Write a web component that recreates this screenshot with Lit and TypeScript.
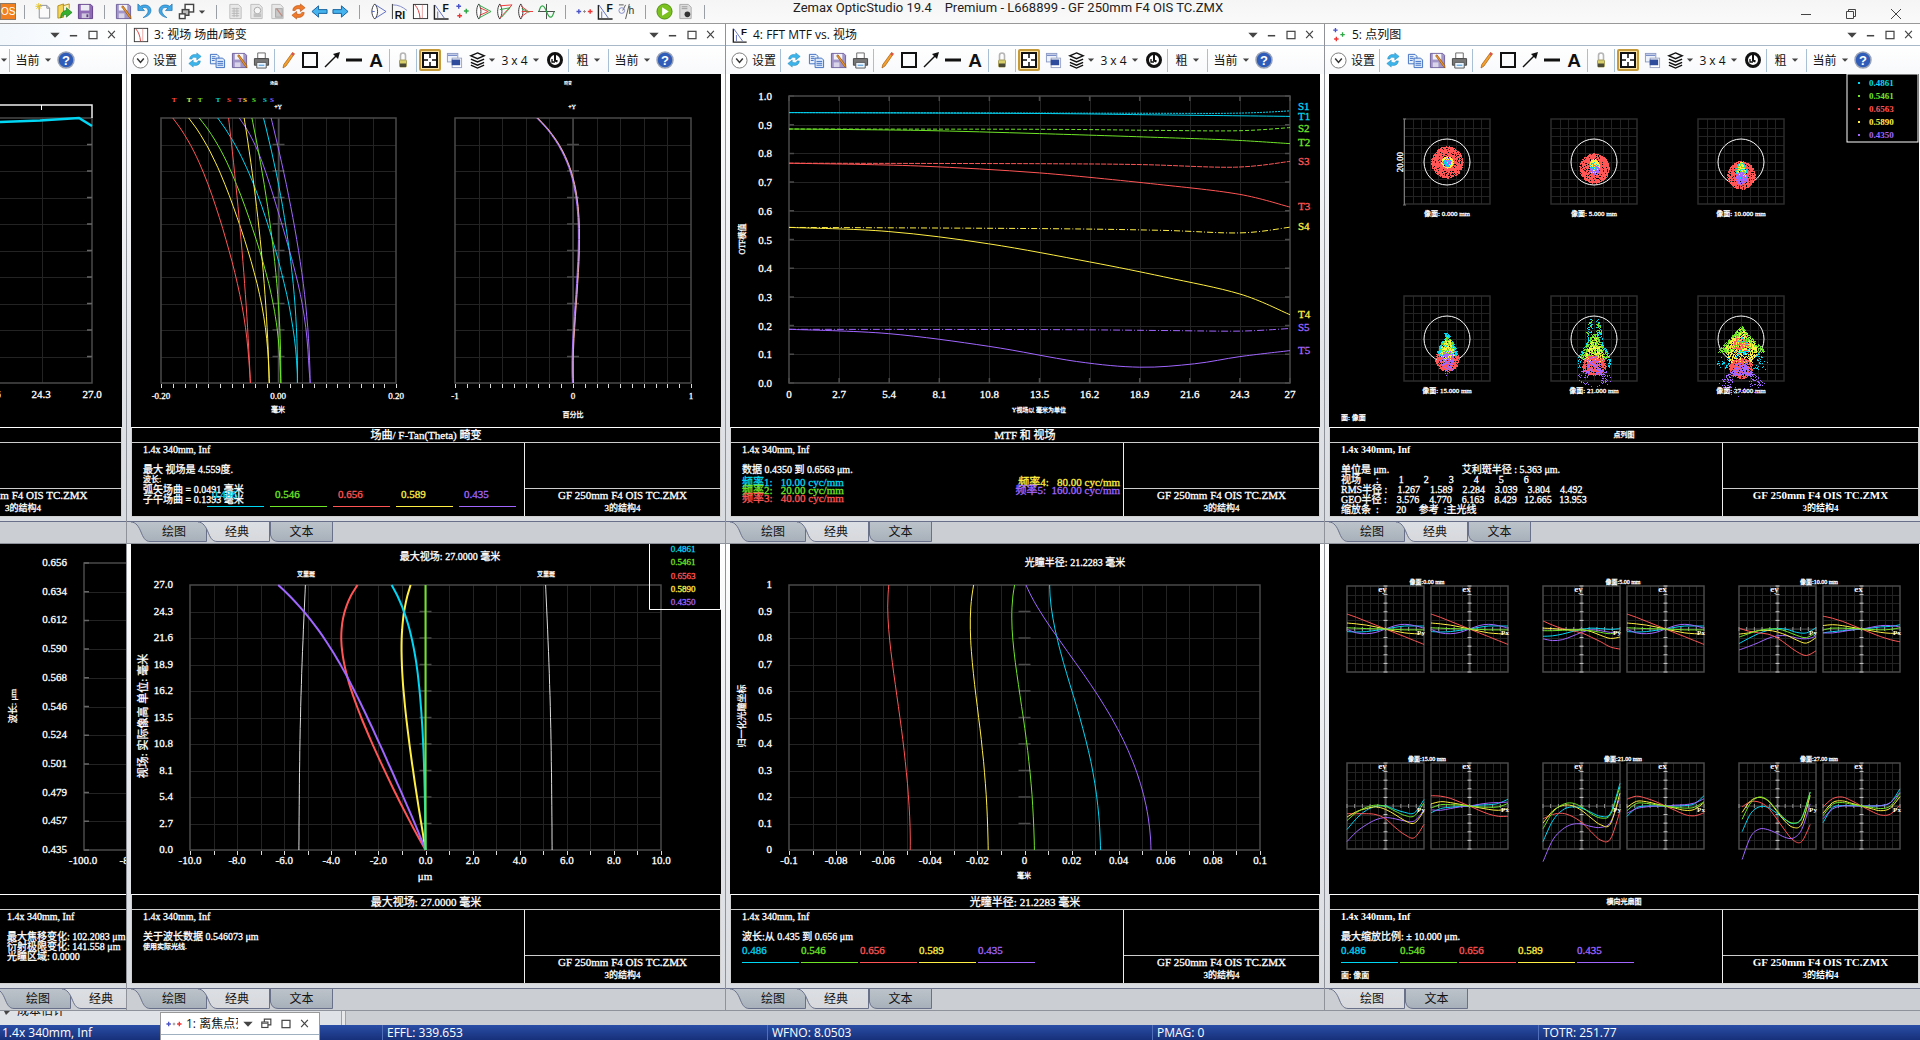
import { LitElement, html, svg, css, nothing, type TemplateResult } from "lit";
import { customElement, property } from "lit/decorators.js";
import { classMap } from "lit/directives/class-map.js";

const CYAN = "#00d7f5";
const GREEN = "#6fe528";
const RED = "#ff5555";
const YELLOW = "#ffee44";
const PURPLE = "#a066ff";
const GRID = "#232323";
const FRAME = "#4a4a4a";

type Pt = [number, number];

/* ---------- drawing helpers ---------- */

function smooth(pts: Pt[]): string {
  const f = (n: number) => n.toFixed(1);
  let d = `M${f(pts[0][0])} ${f(pts[0][1])}`;
  for (let i = 0; i < pts.length - 1; i++) {
    const a = pts[i - 1] ?? pts[i];
    const b = pts[i];
    const c = pts[i + 1];
    const e = pts[i + 2] ?? c;
    d += `C${f(b[0] + (c[0] - a[0]) / 6)} ${f(b[1] + (c[1] - a[1]) / 6)} ${f(c[0] - (e[0] - b[0]) / 6)} ${f(c[1] - (e[1] - b[1]) / 6)} ${f(c[0])} ${f(c[1])}`;
  }
  return d;
}

/** Least-squares polynomial through evenly spaced samples, evaluated on [0, 1]. */
function polyfit(v: number[], deg: number): (t: number) => number {
  const m = deg + 1;
  const a: number[][] = Array.from({ length: m }, () => new Array(m + 1).fill(0));
  v.forEach((y, i) => {
    const t = i / (v.length - 1);
    for (let r = 0; r < m; r++) {
      for (let c = 0; c < m; c++) a[r][c] += t ** (r + c);
      a[r][m] += y * t ** r;
    }
  });
  for (let i = 0; i < m; i++) {
    let p = i;
    for (let r = i + 1; r < m; r++) if (Math.abs(a[r][i]) > Math.abs(a[p][i])) p = r;
    [a[i], a[p]] = [a[p], a[i]];
    for (let r = 0; r < m; r++) {
      if (r === i) continue;
      const k = a[r][i] / a[i][i];
      for (let c = i; c <= m; c++) a[r][c] -= k * a[i][c];
    }
  }
  const q = a.map((row, i) => row[m] / row[i]);
  return (t) => q.reduce((s, c, i) => s + c * t ** i, 0);
}

function label(x: number, y: number, s: string, size = 11, anchor = "middle", fill = "#fff", bold = false) {
  return svg`<text x=${x} y=${y + Math.round(size * 0.35)} font-size=${size} text-anchor=${anchor} fill=${fill} stroke=${fill} stroke-width=${bold ? 0 : 0.3} font-weight=${bold ? 700 : 400}>${s}</text>`;
}

function vlabel(x: number, y: number, s: string, size: number) {
  return svg`<text transform="translate(${x + Math.round(size * 0.35)} ${y}) rotate(-90)" font-size=${size} text-anchor="middle" fill="#fff" stroke="#fff" stroke-width="0.3">${s}</text>`;
}

interface Box { x0: number; x1: number; y0: number; y1: number; }

function grid(b: Box, nx: number, ny: number, frame = FRAME) {
  let d = "";
  for (let i = 1; i < nx; i++) d += `M${Math.round(b.x0 + ((b.x1 - b.x0) * i) / nx)}.5 ${b.y0}V${b.y1}`;
  for (let j = 1; j < ny; j++) d += `M${b.x0} ${Math.round(b.y0 + ((b.y1 - b.y0) * j) / ny)}.5H${b.x1}`;
  return svg`<path d=${d} stroke=${GRID} fill="none"/>
    <rect x=${b.x0} y=${b.y0} width=${b.x1 - b.x0} height=${b.y1 - b.y0} fill="none" stroke=${frame} stroke-width="1.5"/>`;
}

function ticksBelow(b: Box, n: number) {
  let d = "";
  for (let i = 0; i <= n; i++) d += `M${Math.round(b.x0 + ((b.x1 - b.x0) * i) / n)}.5 ${b.y1 + 1}v4`;
  return svg`<path d=${d} stroke="#ddd" fill="none"/>`;
}

function centreTicks(b: Box, n: number) {
  const c = (b.x0 + b.x1) / 2;
  let d = "";
  for (let j = 1; j < n; j++) d += `M${c - 6} ${b.y0 + ((b.y1 - b.y0) * j) / n}h12`;
  return svg`<path d=${d} stroke=${FRAME} stroke-width="1.5"/>`;
}

/** Curve whose samples are spread evenly from the top of the box to its bottom. */
function downCurve(b: Box, lo: number, hi: number, xs: number[], color: string, w = 1) {
  const fit = xs.length > 2 ? polyfit(xs, xs.length > 8 ? 5 : 3) : null;
  const steps = fit ? 24 : 1;
  const pts: Pt[] = [];
  for (let i = 0; i <= steps; i++) {
    const t = i / steps;
    const v = fit ? fit(t) : xs[i];
    pts.push([b.x0 + ((v - lo) / (hi - lo)) * (b.x1 - b.x0), b.y0 + (b.y1 - b.y0) * t]);
  }
  return svg`<path d=${smooth(pts)} fill="none" stroke=${color} stroke-width=${w}/>`;
}

/* ---------- charts ---------- */

function chartPolychromatic() {
  const b: Box = { x0: -360, x1: 92, y0: 44, y1: 309 };
  let ticks = "";
  for (let j = 1; j < 10; j++) ticks += `M87 ${44 + j * 26.5}h5`;
  return svg`
    ${grid(b, 9, 10)}
    <path d=${ticks} stroke="#666" stroke-width="1.5"/>
    <path d="M0 31H92V44" fill="none" stroke="#eee" stroke-width="1.5"/>
    <path d="M41.5 31v5" stroke="#fff"/>
    <path d="M0 48L40 46.500L79 44L92 52" fill="none" stroke=${CYAN} stroke-width="2.5"/>
    ${label(-9, 320, "21.6")}${label(41, 320, "24.3")}${label(92, 320, "27.0")}`;
}

function chartFieldCurvature() {
  const a: Box = { x0: 30, x1: 265, y0: 44, y1: 309 };
  const c: Box = { x0: 324, x1: 560, y0: 44, y1: 309 };
  const t: [string, number[]][] = [
    [RED, [-0.18, -0.15, -0.129, -0.112, -0.098, -0.083, -0.073, -0.063, -0.056, -0.0505, -0.048]],
    [YELLOW, [-0.153, -0.1225, -0.101, -0.083, -0.066, -0.052, -0.0395, -0.029, -0.022, -0.0174, -0.0158]],
    [GREEN, [-0.135, -0.103, -0.082, -0.063, -0.046, -0.032, -0.02, -0.009, -0.002, 0.002, 0.004]],
    [CYAN, [-0.1035, -0.0743, -0.052, -0.033, -0.019, -0.005, 0.007, 0.0174, 0.0253, 0.03, 0.0324]],
    [PURPLE, [-0.067, -0.0395, -0.023, -0.008, 0.0055, 0.019, 0.031, 0.0395, 0.0466, 0.0514, 0.0538]],
    [RED, [-0.085, -0.075, -0.066, -0.059, -0.052, -0.048]],
    [YELLOW, [-0.0585, -0.045, -0.034, -0.0255, -0.019, -0.0158]],
    [GREEN, [-0.045, -0.029, -0.0134, -0.004, 0.002, 0.004]],
    [CYAN, [-0.0253, -0.005, 0.012, 0.0245, 0.03, 0.0324]],
    [PURPLE, [-0.0126, 0.0087, 0.026, 0.041, 0.05, 0.0538]],
  ];
  const d = [-0.303, -0.118, -0.025, 0.031, 0.051, 0.051, 0.039, 0.024, 0.008, 0, 0];
  const marks: [number, string, string][] = [
    [43, "T", RED], [58, "T", YELLOW], [69, "T", GREEN], [87, "T", CYAN], [98, "S", RED],
    [109, "T", PURPLE], [114, "S", YELLOW], [123, "S", GREEN], [134, "S", CYAN], [141, "S", PURPLE],
  ];
  return svg`
    ${grid(a, 10, 10)}${grid(c, 10, 10)}
    <path d="M147.500 44V309M442 44V309" stroke=${FRAME} stroke-width="1.5"/>
    ${centreTicks(a, 10)}${centreTicks(c, 10)}${ticksBelow(a, 20)}${ticksBelow(c, 20)}
    ${t.map(([col, xs]) => downCurve(a, -0.2, 0.2, xs, col))}
    ${downCurve(c, -1, 1, d.map((v) => v - 0.006), PURPLE)}
    ${downCurve(c, -1, 1, d.map((v) => v + 0.004), "#ffb080")}
    ${downCurve(c, -1, 1, d, "#c89be0")}
    ${marks.map(([x, s, col]) => label(x, 26, s, 7, "middle", col, true))}
    ${label(143, 10, "场曲", 4, "middle", "#fff", true)}${label(437, 10, "畸变", 4, "middle", "#fff", true)}
    ${label(147, 33, "+Y", 6)}${label(441, 33, "+Y", 6)}
    ${label(30, 322, "-0.20", 9)}${label(147, 322, "0.00", 9)}${label(265, 322, "0.20", 9)}
    ${label(324, 322, "-1", 9)}${label(442, 322, "0", 9)}${label(560, 322, "1", 9)}
    ${label(147, 336, "毫米", 7)}${label(442, 341, "百分比", 7)}`;
}

function chartMtf() {
  const b: Box = { x0: 59, x1: 560, y0: 22, y1: 309 };
  const put = (p: Pt): Pt => [b.x0 + (p[0] / 27) * 501, b.y1 - p[1] * 287];
  const solid: [string, Pt[]][] = [
    [CYAN, [[0, 0.942], [13.5, 0.939], [20, 0.934], [27, 0.929]]],
    [GREEN, [[0, 0.885], [7, 0.88], [13.5, 0.869], [20.2, 0.855], [24, 0.846], [27, 0.834]]],
    [RED, [[0, 0.766], [7, 0.756], [13.5, 0.732], [20.2, 0.69], [24.3, 0.657], [27, 0.613]]],
    [YELLOW, [[0, 0.542], [5.35, 0.528], [10.76, 0.485], [16.2, 0.422], [20.2, 0.37], [24.3, 0.31], [27, 0.238]]],
    [PURPLE, [[0, 0.187], [5.35, 0.172], [10.76, 0.128], [15.5, 0.075], [18.9, 0.055], [21.85, 0.067], [24.3, 0.092], [27, 0.113]]],
  ];
  const dashed: [string, string, Pt[]][] = [
    [CYAN, "2 1", [[0, 0.942], [18, 0.94], [24, 0.94], [27, 0.948]]],
    [GREEN, "4 2", [[0, 0.885], [13.5, 0.884], [20, 0.88], [24.3, 0.879], [27, 0.89]]],
    [RED, "5 1", [[0, 0.766], [13.5, 0.764], [19, 0.761], [24, 0.752], [27, 0.772]]],
    [YELLOW, "6 2 1 2", [[0, 0.542], [13.5, 0.538], [20, 0.532], [24.3, 0.523], [27, 0.543]]],
    [PURPLE, "7 2 1 2", [[0, 0.187], [13.5, 0.186], [20, 0.183], [24.3, 0.181], [27, 0.19]]],
  ];
  const tags: [string, number, string][] = [
    ["S1", 32, CYAN], ["T1", 42, CYAN], ["S2", 54, GREEN], ["T2", 68, GREEN], ["S3", 87, RED],
    ["T3", 132, RED], ["S4", 152, YELLOW], ["T4", 240, YELLOW], ["S5", 253, PURPLE], ["T5", 276, PURPLE],
  ];
  const xt = ["0", "2.7", "5.4", "8.1", "10.8", "13.5", "16.2", "18.9", "21.6", "24.3", "27"];
  let ticks = "";
  for (let i = 0; i <= 10; i++) ticks += `M${59 + 50.1 * i} 22v5M${59 + 50.1 * i} 309v-5M59 ${22 + 28.7 * i}h5M560 ${22 + 28.7 * i}h-5`;
  return svg`
    ${grid(b, 10, 10)}<path d=${ticks} stroke=${FRAME} stroke-width="1.5"/>
    ${dashed.map(([col, dash, p]) => svg`<path d=${smooth(p.map(put))} fill="none" stroke=${col} stroke-dasharray=${dash}/>`)}
    ${solid.map(([col, p]) => svg`<path d=${smooth(p.map(put))} fill="none" stroke=${col}/>`)}
    ${xt.map((s, i) => label(59 + 50.1 * i, 320, s))}
    ${xt.map((_, i) => label(42, 22 + 28.7 * i, (1 - i / 10).toFixed(1), 11, "end"))}
    ${tags.map(([s, y, col]) => label(568, y, s, 11, "start", col))}
    ${label(309, 336, "Y视场以 毫米为单位", 6)}${vlabel(12, 165, "OTF模值", 8)}`;
}

/** Profile of a ray cloud: [y, half width] pairs from top to bottom. */
interface Cloud { c: string; n: number; p: Pt[]; rim?: number; }

function rng(seed: number) {
  let a = seed;
  return () => {
    a = (a + 0x6d2b79f5) | 0;
    let t = Math.imul(a ^ (a >>> 15), 1 | a);
    t = (t + Math.imul(t ^ (t >>> 7), 61 | t)) ^ t;
    return ((t ^ (t >>> 14)) >>> 0) / 4294967296;
  };
}

function disc(c: string, n: number, cy: number, rx: number, ry: number, rim = 0): Cloud {
  const p: Pt[] = [];
  for (let i = 0; i <= 12; i++) {
    const a = (Math.PI * i) / 12;
    p.push([cy - Math.cos(a) * ry, Math.sin(a) * rx]);
  }
  return { c, n, p, rim };
}

function dots(cx: number, cy: number, k: Cloud, seed: number) {
  const r = rng(seed);
  const top = k.p[0][0];
  const bottom = k.p[k.p.length - 1][0];
  const maxW = Math.max(...k.p.map((q) => q[1]));
  const total = k.rim ? k.n : k.n * 1.8;
  let d = "";
  let made = 0;
  let guard = 0;
  while (made < total && guard++ < total * 20) {
    const y = top + r() * (bottom - top);
    const x = (r() * 2 - 1) * maxW;
    let i = 0;
    while (i < k.p.length - 2 && k.p[i + 1][0] < y) i++;
    const [ya, wa] = k.p[i];
    const [yb, wb] = k.p[i + 1];
    const w = wa + ((wb - wa) * (y - ya)) / (yb - ya || 1);
    if (Math.abs(x) > w || (k.rim && Math.abs(x) < w * k.rim)) continue;
    d += `M${Math.round(cx + x)} ${Math.round(cy + y)}h1v1h-1z`;
    made++;
  }
  return svg`<path d=${d} fill=${k.c}/>`;
}

const SPOTS: { name: string; clouds: Cloud[] }[] = [
  { name: "0.000", clouds: [disc(RED, 800, 0, 16, 16), disc(YELLOW, 160, 0, 6, 6), disc(PURPLE, 40, 0, 4, 5), disc(CYAN, 16, 0, 4, 4)] },
  { name: "5.000", clouds: [disc(RED, 700, 6, 15, 15), disc(YELLOW, 160, 4, 5, 7), disc(PURPLE, 60, 8, 5, 4), disc(CYAN, 20, 4, 4, 4)] },
  { name: "10.000", clouds: [
    disc(RED, 600, 13, 14, 14),
    { c: CYAN, n: 110, p: [[-3, 0], [3, 4], [10, 6], [18, 4]] },
    { c: YELLOW, n: 70, p: [[0, 1], [6, 4], [14, 4]] },
    { c: GREEN, n: 20, p: [[0, 1], [8, 5], [12, 4]] }, disc(PURPLE, 100, 16, 6, 6)] },
  { name: "15.000", clouds: [
    disc(RED, 440, 20, 12, 12),
    { c: CYAN, n: 220, p: [[-6, 3], [-1, 3], [6, 8], [12, 10], [16, 9]] },
    { c: GREEN, n: 110, p: [[-3, 1], [3, 5], [10, 7], [15, 6]] },
    { c: YELLOW, n: 90, p: [[0, 2], [8, 6], [16, 7], [20, 4]] },
    disc(PURPLE, 90, 20, 7, 9), { c: PURPLE, n: 14, p: [[28, 7], [32, 5], [36, 1]] }] },
  { name: "21.000", clouds: [
    { c: GREEN, n: 70, p: [[-20, 4], [-12, 7], [-5, 8], [0, 6]], rim: 0.3 },
    { c: CYAN, n: 60, p: [[-20, 5], [-12, 7], [0, 8]], rim: 0.3 },
    { c: GREEN, n: 260, p: [[-6, 1], [0, 5], [8, 10], [18, 14], [20, 10]] },
    { c: CYAN, n: 90, p: [[0, 6], [8, 11], [18, 16], [28, 17]], rim: 0.8 },
    { c: YELLOW, n: 150, p: [[-2, 1], [6, 5], [14, 9], [24, 9]] },
    disc(RED, 300, 26, 12, 10), { c: PURPLE, n: 90, p: [[16, 3], [22, 6], [30, 7], [36, 10]] },
    { c: PURPLE, n: 80, p: [[30, 13], [36, 16], [44, 16], [48, 4]], rim: 0.4 }] },
  { name: "27.000", clouds: [
    { c: CYAN, n: 110, p: [[12, 16], [17, 20], [24, 26], [30, 24]], rim: 0.35 },
    { c: GREEN, n: 420, p: [[-13, 1], [-6, 7], [2, 14], [9, 22], [13, 23]] },
    { c: YELLOW, n: 300, p: [[-11, 1], [-4, 7], [4, 13], [10, 17], [24, 11]] },
    { c: CYAN, n: 50, p: [[-2, 4], [6, 7], [18, 9]] },
    { c: RED, n: 60, p: [[-4, 5], [6, 10], [14, 8]] },
    disc(RED, 280, 29, 12, 10), { c: PURPLE, n: 130, p: [[24, 5], [30, 8], [36, 12]] },
    { c: PURPLE, n: 110, p: [[33, 12], [38, 18], [45, 23], [48, 20]], rim: 0.4 },
    { c: PURPLE, n: 8, p: [[48, 12], [54, 16], [59, 4]] }] },
];

function chartSpots() {
  const legend: [string, string][] = [["0.4861", CYAN], ["0.5461", GREEN], ["0.6563", RED], ["0.5890", YELLOW], ["0.4350", PURPLE]];
  return svg`
    ${SPOTS.map((s, i) => {
      const cx = 118 + (i % 3) * 147;
      const cy = i < 3 ? 88 : 265;
      return svg`${grid({ x0: cx - 43, x1: cx + 43, y0: cy - 43, y1: cy + 42 }, 10, 10, "#2c2c2c")}
        <circle cx=${cx} cy=${cy} r="23" fill="none" stroke="#fff"/>
        ${label(cx, cy + 52, `像面: ${s.name} mm`, 7)}
        ${s.clouds.map((k, j) => dots(cx, cy, k, i * 31 + j * 7 + 3))}`;
    })}
    <path d="M74 45h3M75.500 45v86M74 131h3" stroke="#777" fill="none"/>
    ${vlabel(71, 88, "20.00", 9)}
    ${label(12, 344, "面: 像面", 7, "start")}
    <rect x="518" y="0" width="71" height="68" fill="#000" stroke="#fff"/>
    ${legend.map(([s, c], i) => svg`<rect x="529" y=${8 + i * 13} width="2" height="2" fill=${c}/>${label(540, 9 + i * 13, s, 9, "start", c, true)}`)}`;
}

function chartFocalShift() {
  const b: Box = { x0: 84, x1: 555, y0: 19, y1: 306 };
  const ys = ["0.656", "0.634", "0.612", "0.590", "0.568", "0.546", "0.524", "0.501", "0.479", "0.457", "0.435"];
  return svg`
    ${grid(b, 10, 10)}
    <path d=${ys.map((_, i) => `M84 ${19 + i * 28.7}h5`).join("")} stroke="#666" stroke-width="1.5"/>
    ${ys.map((s, i) => label(67, 18 + i * 28.7, s, 11, "end"))}
    ${label(83, 316, "-100.0")}${label(131, 316, "-80.0")}
    ${vlabel(13, 162, "波长: μm", 9)}`;
}

function chartLateral() {
  const b: Box = { x0: 59, x1: 530, y0: 41, y1: 306 };
  const ys = ["27.0", "24.3", "21.6", "18.9", "16.2", "13.5", "10.8", "8.1", "5.4", "2.7", "0.0"];
  const legend: [string, string][] = [["0.4861", CYAN], ["0.5461", GREEN], ["0.6563", RED], ["0.5890", YELLOW], ["0.4350", PURPLE]];
  const airy = [5.1, 5.15, 5.2, 5.24, 5.28, 5.31, 5.33, 5.35, 5.36, 5.37, 5.375];
  return svg`
    ${grid(b, 20, 10)}${centreTicks(b, 10)}${ticksBelow(b, 20)}
    ${downCurve(b, -10, 10, airy, "#ddd")}${downCurve(b, -10, 10, airy.map((v) => -v), "#ddd")}
    ${downCurve(b, -10, 10, [-2.89, -3.42, -3.58, -3.46, -3.14, -2.71, -2.25, -1.76, -1.19, -0.61, 0], RED, 2)}
    ${downCurve(b, -10, 10, [-0.63, -0.91, -1.01, -1, -0.93, -0.83, -0.67, -0.53, -0.36, -0.18, 0], YELLOW, 2)}
    ${downCurve(b, -10, 10, [-6.25, -5.18, -4.29, -3.64, -3, -2.47, -1.96, -1.42, -0.95, -0.455, 0], PURPLE, 2)}
    ${downCurve(b, -10, 10, [-1.44, -0.91, -0.59, -0.395, -0.24, -0.16, -0.1, -0.06, -0.03, -0.01, 0], CYAN, 2)}
    ${downCurve(b, -10, 10, [0, 0], GREEN, 2)}
    ${ys.map((s, i) => label(42, 40 + i * 26.5, s, 11, "end"))}
    ${ys.map((_, i) => label(59 + i * 47.1, 316, (i * 2 - 10).toFixed(1)))}
    ${label(294, 332, "μm")}
    ${label(319, 12, "最大视场: 27.0000 毫米", 10)}
    ${label(175, 30, "艾里斑", 6)}${label(415, 30, "艾里斑", 6)}
    ${vlabel(12, 172, "视场: 实际像高 单位: 毫米", 11)}
    <path d="M518.500 0V65.500H589.500V0" fill="none" stroke="#fff"/>
    ${legend.map(([s, c], i) => label(552, 5 + Math.round(i * 13.3), s, 9, "middle", c))}`;
}

function chartLongitudinal() {
  const b: Box = { x0: 59, x1: 530, y0: 41, y1: 306 };
  const xs = ["-0.1", "-0.08", "-0.06", "-0.04", "-0.02", "0", "0.02", "0.04", "0.06", "0.08", "0.1"];
  const ys = ["1", "0.9", "0.8", "0.7", "0.6", "0.5", "0.4", "0.3", "0.2", "0.1", "0"];
  const c: [string, number[]][] = [
    [RED, [-0.0576, -0.0581, -0.0573, -0.056, -0.0545, -0.0529, -0.0515, -0.0502, -0.0492, -0.0487, -0.0485]],
    [YELLOW, [-0.0216, -0.0229, -0.0229, -0.0221, -0.0208, -0.0195, -0.0182, -0.017, -0.0162, -0.0157, -0.0154]],
    [GREEN, [-0.0042, -0.0054, -0.005, -0.0037, -0.0023, -0.0005, 0.001, 0.0023, 0.0032, 0.0039, 0.0042]],
    [CYAN, [0.0107, 0.0115, 0.014, 0.0167, 0.0201, 0.0235, 0.0265, 0.0289, 0.0307, 0.0318, 0.0323]],
    [PURPLE, [0.0006, 0.0067, 0.0141, 0.0222, 0.03, 0.0369, 0.0427, 0.0474, 0.0508, 0.0529, 0.0537]],
  ];
  return svg`
    ${grid(b, 20, 10)}${centreTicks(b, 10)}${ticksBelow(b, 20)}
    ${c.map(([col, v]) => downCurve(b, -0.1, 0.1, v, col))}
    ${ys.map((s, i) => label(42, 40 + i * 26.5, s, 11, "end"))}
    ${xs.map((s, i) => label(59 + i * 47.1, 316, s))}
    ${label(294, 332, "毫米", 7)}
    ${label(345, 18, "光瞳半径: 21.2283 毫米", 10)}
    ${vlabel(12, 172, "归一化光瞳坐标", 9)}`;
}

interface Fan { name: string; lo: number; hi: number; ey: number[][]; ex: number[][]; }
const FAN_COLORS = [CYAN, PURPLE, RED, YELLOW, GREEN];
const ON_AXIS = [
  [-0.6, -0.7, -0.6, -0.3, 0, 0.4, 0.7, 0.7, 0.7],
  [-0.1, -0.9, -1.1, -0.8, 0, 0.8, 1.1, 0.8, 0.2],
  [3.5, 2.7, 1.8, 0.9, 0, -0.9, -1.8, -2.7, -3.6],
  [1.4, 1.2, 0.9, 0.5, 0, -0.5, -0.9, -1.1, -1.2],
  [0.3, 0.2, 0.1, 0.05, 0, -0.1, -0.2, -0.2, -0.2],
];
const FANS: Fan[] = [
  { name: "0.00", lo: -1, hi: 1, ey: ON_AXIS, ex: ON_AXIS },
  { name: "5.00", lo: -1, hi: 1, ex: ON_AXIS, ey: [
    [-1.7, -1.6, -1.2, -0.6, -0.1, 0.2, 0.1, -0.1, 0.1],
    [-2.3, -2.7, -2.5, -1.7, -0.8, -0.2, -0.4, -0.8, -0.6],
    [1.9, 0.9, 0.1, -0.4, -0.9, -1.9, -3, -4.2, -4.7],
    [0.2, 0.1, -0.1, -0.2, -0.2, -0.6, -1.5, -2.2, -1.9],
    [-0.4, -0.4, -0.3, -0.2, -0.2, -0.4, -0.8, -1.1, -0.6]] },
  { name: "10.00", lo: -1, hi: 1, ey: [
    [-3.4, -2.2, -1.1, -0.3, 0.1, -0.1, -0.8, -0.9, 0.3],
    [-4.9, -4.1, -3.2, -2.2, -1.6, -1.6, -2.1, -2.3, -1.7],
    [0.2, -0.5, -0.9, -1.2, -2.1, -3.7, -5.3, -6.2, -5.1],
    [-1.2, -0.9, -0.4, -0.3, -0.7, -1.5, -2.6, -3.3, -2],
    [-1.9, -1.1, -0.4, 0, 0, -0.6, -1.5, -2, -0.8]], ex: [
    [-0.9, -0.6, -0.4, -0.2, 0, 0.2, 0.5, 0.6, 1],
    [-0.9, -0.9, -0.6, -0.2, 0, 0.4, 0.8, 0.8, 0.5],
    [3, 2.5, 1.8, 0.9, 0, -0.9, -1.8, -2.5, -3],
    [0.8, 1, 0.8, 0.4, 0, -0.4, -0.8, -1, -1],
    [-0.2, 0.2, 0.2, 0.1, 0, -0.1, -0.2, -0.1, 0.3]] },
  { name: "15.00", lo: -1, hi: 1, ey: [
    [-5.5, -2.9, -1, -0.1, 0, -0.8, -1.5, -1.6, 1.5],
    [-8.3, -6, -4.4, -3.2, -2.7, -3, -3.5, -3.5, -1],
    [-1.8, -1.8, -1.8, -2, -3, -5, -6.7, -7.4, -4.3],
    [-2.6, -1.3, -0.6, -0.2, -0.8, -2, -3.4, -4, -1.2],
    [-3.4, -1.5, -0.3, 0.2, -0.1, -1.2, -2.2, -2.3, 0.8]], ex: [
    [-1.6, -0.6, -0.3, -0.1, 0, 0.2, 0.3, 0.6, 1.6],
    [-0.9, -1, -0.6, -0.2, 0, 0.4, 0.7, 0.8, 0.9],
    [2.4, 2.3, 1.8, 0.9, 0, -1, -1.9, -2.4, -2.4],
    [0.5, 1, 0.8, 0.4, 0, -0.4, -0.8, -1, -0.6],
    [-0.5, 0.3, 0.3, 0.2, 0, -0.2, -0.3, -0.2, 0.6]] },
  { name: "21.00", lo: -1, hi: 1, ey: [
    [-8.3, -3.5, -1, -0.2, -0.5, -1.5, -2.4, -1.7, 5.3],
    [-13, -8, -5.5, -4.3, -4.2, -4.8, -5, -3.8, 2],
    [-3, -2, -1.7, -2.4, -3.8, -6, -8, -7.7, -1.2],
    [-4, -1.2, 0.1, 0.1, -1, -2.8, -4.4, -4.2, 3],
    [-5.3, -1.5, 0.3, 0.7, -0.2, -1.8, -2.8, -2, 4.5]], ex: [
    [-2.4, -0.4, 0, 0, 0, 0, 0.1, 0.5, 2.4],
    [-1.7, -0.6, -0.2, 0, 0, 0.2, 0.3, 0.7, 1.7],
    [1.6, 2.3, 1.8, 1, 0, -1, -2, -2.3, -1.6],
    [-0.3, 1.1, 1, 0.5, 0, -0.5, -1, -0.8, 0.8],
    [-1.1, 0.6, 0.6, 0.3, 0, -0.3, -0.5, -0.3, 1]] },
  { name: "27.00", lo: -0.92, hi: 0.85, ey: [
    [-6, -1.8, -0.2, -0.3, -1.6, -3.1, -4.1, -2.8, 3.2],
    [-12.5, -7.2, -5.4, -5.5, -6.3, -7.3, -7.5, -5.5, 0.5],
    [-0.2, 1, 0.9, -0.3, -2.8, -5.6, -8, -8.3, -4.3],
    [-1.5, 1.2, 2, 1.3, -1, -3.5, -5, -4.2, 2.5],
    [-3.1, 0.7, 2.1, 1.4, -0.8, -3, -4, -2.9, 3.3]], ex: [
    [-3.9, -0.4, 0.1, 0.1, 0, 0, 0.1, 0.8, 4],
    [-3, -0.7, 0, 0, 0, 0, 0.1, 0.8, 3.2],
    [-0.2, 1.7, 2.1, 1.2, 0, -1.2, -2.1, -1.9, 0.2],
    [-1.7, 0.8, 1.2, 0.6, 0, -0.6, -1.1, -0.5, 2.2],
    [-2.3, 0.4, 0.8, 0.4, 0, -0.3, -0.6, 0, 3]] },
];

function fanPlot(x: number, cy: number, name: string, sub: string, lo: number, hi: number, data: number[][]) {
  const cx = x + 38.5;
  let minor = "";
  let light = "";
  for (let i = 0; i <= 10; i++) {
    light += `M${cx - 2} ${cy - 43 + i * 8.6}h4`;
    minor += `M${x + i * 7.7} ${cy - 2}v4`;
  }
  return svg`
    ${grid({ x0: x, x1: x + 77, y0: cy - 43, y1: cy + 43 }, 10, 10)}
    <path d="M${cx} ${cy - 43}v86" stroke="#555" stroke-width="2"/>
    <path d="M${x} ${cy}h77" stroke="#444"/>
    <path d=${light} stroke="#ccc"/><path d=${minor} stroke="#999"/>
    ${data.map((v, k) => svg`<path fill="none" stroke=${FAN_COLORS[k]} d=${smooth(v.map((y, i): Pt => [cx + (lo + ((hi - lo) * i) / 8) * 38.5, cy - y * 4.28]))}/>`)}
    ${label(cx - 3, cy - 40, name, 9, "middle", "#fff", true)}${label(x + 74, cy + 4, sub, 7, "middle", "#fff", true)}`;
}

function chartFans() {
  return svg`${FANS.map((f, i) => {
    const x = 18 + (i % 3) * 196;
    const cy = i < 3 ? 85 : 262;
    return svg`
      ${fanPlot(x, cy, "ey", "Py", f.lo, f.hi, f.ey)}
      ${fanPlot(x + 84, cy, "ex", "Px", -1, 1, f.ex)}
      ${label(x + 80, cy - 47, `像面:${f.name} mm`, 6)}`;
  })}`;
}

/* ---------- icons ---------- */

const ic = (body: TemplateResult, size = 18) => html`<svg class="ic" viewBox="0 0 18 18" width=${size} height=${size} aria-hidden="true">${body}</svg>`;

const I = {
  newDoc: svg`<path d="M4.500 2.500h8l3 3v10.500h-11z" fill="#fafafa" stroke="#8a8f96"/><path d="M12.500 2.500v3h3" fill="none" stroke="#8a8f96"/><path d="M4 0v7M.5 3.500h7M1.500 1l5 5M6.500 1l-5 5" stroke="#e6c62a"/>`,
  open: svg`<path d="M2 3l6-2v14l-6 1z" fill="#f5d65a" stroke="#b08d1e"/><path d="M7 3l7-2v5" fill="#fff2b0" stroke="#b08d1e"/><path d="M5 16c0-6 3-8 6-8v-3l6 5-6 5v-3c-2 0-4 1-6 4z" fill="#35b12f" stroke="#187a17" stroke-width=".7"/>`,
  save: svg`<path d="M1.500 1.500h13l2 2v13h-15z" fill="#8f6bb5" stroke="#5f3f87"/><rect x="4" y="2" width="9" height="6" fill="#ececf4"/><rect x="5" y="11" width="8" height="5" fill="#cfc6dd"/><rect x="10" y="12" width="2" height="3" fill="#5f3f87"/>`,
  saveAs: svg`<path d="M1.500 1.500h13l2 2v13h-15z" fill="#a296c8" stroke="#6d5f9a"/><rect x="4" y="2" width="9" height="6" fill="#f2f2f8"/><rect x="4" y="11" width="6" height="5" fill="#d9d4e8"/><path d="M7 4l8 11 2 2-.5-3-8-11z" fill="#f59b23" stroke="#8a4a10" stroke-width=".7"/>`,
  undo: svg`<path d="M2 1v7h7L6.500 5.500C10 3.500 14 6 12.500 10c-.8 2.300-3 4-5 5.500 5-1 8.500-4 8.300-8C15.500 2.500 9 .5 4.500 3.500z" fill="#3fa9e8" stroke="#1c6fae" stroke-width=".7"/>`,
  redo: svg`<path d="M16 1v7H9l2.500-2.500C8 3.500 4 6 5.500 10c.8 2.300 3 4 5 5.500-5-1-8.500-4-8.300-8C2.500 2.500 9 .5 13.500 3.500z" fill="#3fa9e8" stroke="#1c6fae" stroke-width=".7"/>`,
  windows: svg`<rect x="7.500" y="1.500" width="9" height="8" fill="#fff" stroke="#444" stroke-width="1.500"/><rect x="4.500" y="7" width="7" height="6" fill="#bbb" stroke="#444" stroke-width="1.500"/><rect x="1.500" y="11.500" width="6" height="5" fill="#fff" stroke="#444" stroke-width="1.500"/>`,
  greyDoc: svg`<path d="M3 1.500h9l3 3v12H3z" fill="#e8e8e8" stroke="#bdbdbd"/><path d="M5 6h8M5 8.500h8M5 11h8M5 13.500h8M7.500 5v10M10.500 5v10" stroke="#b8b8b8"/>`,
  greyLens: svg`<path d="M3 1.500h9l3 3v12H3z" fill="#e8e8e8" stroke="#bdbdbd"/><circle cx="10" cy="8" r="3.500" fill="#f6f6f6" stroke="#a8a8a8"/><rect x="6" y="11" width="8" height="4" fill="#c0c0c0"/>`,
  greyEdit: svg`<path d="M3 1.500h9l3 3v12H3z" fill="#e8e8e8" stroke="#bdbdbd"/><rect x="7" y="6" width="7" height="9" fill="#c8c8c8" stroke="#a5a5a5"/><path d="M8 6l6 8" stroke="#c08a80" stroke-width="1.300"/>`,
  swap: svg`<path d="M3 8c0-4 4-6 8-5V1l5 4-5 4V6.500C8 5.500 6 6 5.500 8zM15 10c0 4-4 6-8 5v2l-5-4 5-4v2.500c3 1 5 .5 5.500-1.500z" fill="#f07a2a" stroke="#b04c10" stroke-width=".6"/>`,
  refresh: svg`<path d="M3 8c0-4 4-6 8-5V1l5 4-5 4V6.500C8 5.500 6 6 5.500 8zM15 10c0 4-4 6-8 5v2l-5-4 5-4v2.500c3 1 5 .5 5.500-1.500z" fill="#3ab4ea" stroke="#1b7fb5" stroke-width=".5"/>`,
  left: svg`<path d="M1 9l7-6v4h9v4H8v4z" fill="#45b4ee" stroke="#14609c"/>`,
  right: svg`<path d="M17 9l-7-6v4H1v4h9v4z" fill="#45b4ee" stroke="#14609c"/>`,
  lens: svg`<path d="M5 1c-4 4-4 12 0 16 4-4 4-12 0-16z" fill="#fff" stroke="#333"/><path d="M6 2l11 7-11 7M2 9h3" fill="none" stroke="#5b6bc0"/>`,
  ri: svg`<path d="M1.500 1v16" stroke="#333"/><path d="M2 2c6 0 10 2 15 6" stroke="#8088c8" fill="none"/><text x="4" y="17" font-size="11" font-weight="700" font-family="Liberation Sans, sans-serif" fill="#111">RI</text>`,
  curve: svg`<rect x="1.500" y="1.500" width="15" height="15" fill="#fff" stroke="#333"/><path d="M3 2c3 3 5 8 5.500 14" stroke="#d33" fill="none"/><path d="M11 2v14" stroke="#e8a0a0"/>`,
  mtf: svg`<path d="M1.500 2v15h15" stroke="#222" fill="none" stroke-width="1.500"/><path d="M2 2l10 14M5 9v7" stroke="#5b6bc0" fill="none"/><text x="10" y="9" font-size="11" font-weight="700" font-family="Liberation Sans, sans-serif" fill="#111">F</text>`,
  spots: svg`<path d="M5 1v5M2.500 3.500h5" stroke="#4a53c8" stroke-width="1.500"/><path d="M13 6v5M10.500 8.500h5" stroke="#2da845" stroke-width="1.500"/><path d="M6 11v5M3.500 13.500h5" stroke="#e33" stroke-width="1.500"/>`,
  focus: svg`<path d="M3 6.500v5M.5 9h5" stroke="#4a53c8" stroke-width="1.500"/><path d="M9 7.500v3M7.500 9h3" stroke="#888"/><path d="M15 6.500v5M12.500 9h5" stroke="#e33" stroke-width="1.500"/>`,
  ray1: svg`<path d="M4 1c-3 4-3 12 0 16 3-4 3-12 0-16z" fill="#fff" stroke="#333"/><path d="M4 2l13 7-13 7" fill="none" stroke="#2da845"/><path d="M5 5l9 4-9 4" fill="none" stroke="#e33"/>`,
  ray2: svg`<path d="M4 1c-3 4-3 12 0 16 3-4 3-12 0-16z" fill="#fff" stroke="#333"/><path d="M4 3l13-1L4 16" fill="none" stroke="#e33"/><path d="M4 7l11-2-9 10" fill="none" stroke="#2da845"/>`,
  ray3: svg`<path d="M4 1c-3 4-3 12 0 16 3-4 3-12 0-16z" fill="#fff" stroke="#333"/><path d="M4 3l8 6-8 6M5 9h12" fill="none" stroke="#e33"/><path d="M5 6l8 4" stroke="#2da845"/>`,
  sine: svg`<path d="M0 9h18M9 1v16" stroke="#444"/><path d="M1 9c2-8 5-8 8 0s6 8 8 0" fill="none" stroke="#2da845" stroke-width="1.300"/>`,
  eh: svg`<path d="M1 2h5M8 2l-3 6M12 1L8 17" stroke="#555" fill="none"/><circle cx="4" cy="8" r="3" fill="none" stroke="#8088c8"/><text x="11" y="12" font-size="11" font-family="Liberation Sans, sans-serif" fill="#333">h</text>`,
  play: svg`<circle cx="9" cy="9" r="8" fill="#7cc21e" stroke="#4d8d0c"/><path d="M6.500 4.500v9l7-4.500z" fill="#fff"/>`,
  docStop: svg`<path d="M3 1.500h9l3 3v12H3z" fill="#ddd" stroke="#aaa"/><path d="M5 4h6M5 6h6" stroke="#999"/><circle cx="11" cy="12" r="3" fill="#333"/>`,
  chevron: svg`<circle cx="9" cy="9" r="8" fill="#fff" stroke="#777"/><path d="M5.500 7l3.500 4 3.500-4" fill="none" stroke="#333" stroke-width="1.600"/>`,
  copy: svg`<path d="M1.500 2.500h7l2 2v8h-9z" fill="#e9f1fc" stroke="#3f6fc0"/><path d="M7.500 6.500h7l2 2v8h-9z" fill="#dce9fb" stroke="#3f6fc0"/><path d="M9 10h6M9 12h6M9 14h6M3 5h4M3 7h4M3 9h3" stroke="#3f6fc0"/>`,
  print: svg`<path d="M5 1h8v6H5z" fill="#fff" stroke="#666"/><path d="M1.500 7h15v7h-15z" fill="#777" stroke="#444"/><path d="M4 11h10v6H4z" fill="#eef6ff" stroke="#555"/><path d="M6 14h6" stroke="#3a8fd0"/>`,
  pencil: svg`<path d="M13.500 1.500l2 1.300L7 15l-3 2 .8-3.500z" fill="#f5a02a" stroke="#a35a12" stroke-width=".7"/><path d="M13.500 1.500l2 1.300-1.300 2-2-1.300z" fill="#e05050"/>`,
  rect: svg`<rect x="2" y="2" width="14" height="14" fill="none" stroke="#111" stroke-width="2"/>`,
  arrow: svg`<path d="M2 16L13 5" stroke="#111" stroke-width="1.500"/><path d="M17 1l-2 7-5-5z" fill="#111"/>`,
  line: svg`<path d="M1 9h16" stroke="#111" stroke-width="3"/>`,
  letter: svg`<text x="9" y="16" text-anchor="middle" font-size="19" font-weight="700" font-family="Liberation Sans, sans-serif" fill="#111">A</text>`,
  lock: svg`<path d="M6.500 9V4.500a2.500 2.500 0 0 1 5 0V9" fill="none" stroke="#b5b5b5" stroke-width="1.600"/><rect x="5.500" y="9" width="7" height="7" rx="1" fill="#d8cf6a" stroke="#a8a060"/><path d="M6 12.500h6v3.500H6z" fill="#4a4a36"/>`,
  fit: svg`<rect x="2" y="2" width="14" height="14" fill="#fff" stroke="#111" stroke-width="2"/><path d="M9 2v5M9 11v5M2 9h5M11 9h5" stroke="#111" stroke-width="1.500"/>`,
  dock: svg`<rect x="1.500" y="1.500" width="11" height="9" fill="#eef2fb" stroke="#8c9cc4"/><path d="M2 3.500h10" stroke="#7a8fc8" stroke-width="1.500"/><rect x="6.500" y="6.500" width="10" height="10" fill="#fff" stroke="#9aa5c5"/><rect x="6" y="8" width="9" height="6" fill="#2f4c9c"/>`,
  layers: svg`<path d="M9 1l7 3-7 3-7-3zM2 7.500l7 3 7-3M2 11l7 3 7-3M2 14l7 3 7-3" fill="none" stroke="#111" stroke-width="1.500"/>`,
  clock: svg`<circle cx="9" cy="9" r="6.500" fill="#fff" stroke="#111" stroke-width="3"/><path d="M9 4v5.500l2.500 1" stroke="#111" stroke-width="2" fill="none"/><path d="M6 8v3h3" stroke="#111" stroke-width="1.300" fill="none"/>`,
  help: svg`<circle cx="9" cy="9" r="8" fill="#2e5cb8" stroke="#9aa3b5" stroke-width="1.500"/><text x="9" y="14" text-anchor="middle" font-size="13" font-weight="700" font-family="Liberation Sans, sans-serif" fill="#fff">?</text>`,
  caret: svg`<path d="M2 5.500h14L9 13z" fill="#444"/>`,
  min: svg`<path d="M3 11h12" stroke="#444" stroke-width="2.500"/>`,
  max: svg`<rect x="3" y="3.500" width="12" height="11" fill="none" stroke="#444" stroke-width="1.800"/>`,
  close: svg`<path d="M3.500 3l11 12M14.500 3l-11 12" stroke="#444" stroke-width="2"/>`,
  restore: svg`<path d="M6 7V3h9v8h-4" fill="none" stroke="#444" stroke-width="1.600"/><rect x="2.500" y="7" width="8.500" height="7.500" fill="none" stroke="#444" stroke-width="1.600"/><path d="M2.500 9h8" stroke="#444"/>`,
};

const base = css`
  * { box-sizing: border-box; }
  button {
    display: flex; align-items: center; justify-content: center;
    padding: 0; margin: 0; border: 0; background: none; color: #111;
    font: 12px "Open Sans", "Noto Sans CJK SC", sans-serif; white-space: nowrap;
  }
  svg { display: block; flex: none; }
`;

/* ---------- window pane ---------- */

interface Swatch { s: string; c: string; }
const SWATCHES: Swatch[] = [
  { s: "0.486", c: CYAN }, { s: "0.546", c: GREEN }, { s: "0.656", c: RED }, { s: "0.589", c: YELLOW }, { s: "0.435", c: PURPLE },
];

interface Pane {
  id: string;
  name?: string;
  icon?: TemplateResult;
  bar?: "full" | "end";
  view: [number, number];
  draw: () => TemplateResult;
  title: string;
  small?: boolean;
  bold?: boolean;
  body: TemplateResult;
  config: "full" | "only" | "none";
  tabs: string[];
  current: number;
  cut?: boolean;
}

const swatches = (cls = "swatches") => html`<div class=${cls}>
  ${SWATCHES.map((w) => html`<span class="sw" style="color:${w.c}">${w.s}</span>`)}
</div>`;

@customElement("plot-pane")
export class PlotPane extends LitElement {
  @property({ attribute: false }) pane!: Pane;

  static styles = [base, css`
    :host { display: flex; flex-direction: column; min-width: 0; overflow: hidden; border-left: 1px solid #8f9399; }
    :host(.first) { border-left: 0; }
    .head { display: flex; align-items: center; height: 22px; padding: 0 5px 0 6px; background: #fff; border-bottom: 1px solid #a9b8c8; }
    .first-head { justify-content: flex-end; background: linear-gradient(90deg, #f3f8fd, #fff); }
    :host(.last) .head { padding-right: 2px; }
    .head h2 { flex: 1; margin: 0 0 0 5px; font: 12px/20px "Open Sans", "Noto Sans CJK SC", sans-serif; color: #111; white-space: nowrap; }
    .ctl { width: 19px; height: 20px; }
    .bar { display: flex; align-items: center; height: 28px; padding-left: 3px; background: linear-gradient(#fff, #f8f9fb); }
    .bar.end { padding-left: 0; }
    .b { width: 22px; height: 24px; }
    .b.wide { width: 26px; }
    .b.on { width: 22px; height: 22px; border: 2px solid #c59a3a; border-radius: 2px; background: #fbe3a4; }
    .settings { width: 49px; gap: 4px; }
    .sep { width: 1px; height: 23px; margin: 0 2px; background: #a9bfd4; flex: none; }
    .dd { gap: 4px; padding: 0 5px; height: 24px; }
    .dd.part { width: 7px; padding: 0; }
    .dd.layers { width: 30px; padding: 0; gap: 2px; }
    .dd.num { width: 47px; padding: 0; }
    .dd.coarse { width: 35px; }
    .dd.now { width: 43px; }
    .frame { display: flex; flex-direction: column; flex: 1; padding: 0 4px 4px; background: linear-gradient(#fff, #e4e6ea 60%, #d9dce0); }
    :host(.last) .frame { padding-right: 1px; }
    :host(.first) .frame { padding-left: 0; }
    :host(.cut) .frame { padding-right: 0; }
    .plot { width: 100%; height: auto; background: #000; font-family: "Liberation Serif", "Noto Sans CJK SC", serif; }
    .plate { height: 90px; flex: none; display: flex; flex-direction: column; overflow: hidden; border: 1px solid #d0d0d0; border-top: 1px solid #fff; background: #000; color: #fff; font: 10px/10px "Liberation Serif", "Noto Sans CJK SC", serif; -webkit-text-stroke: 0.3px; }
    :host(.first) .plate { border-left: 0; }
    :host(.cut) .plate { border-right: 0; }
    .plate h3 { height: 15px; margin: 0; border-bottom: 1px solid #ccc; font-size: 11px; line-height: 14px; font-weight: 400; text-align: center; }
    .plate.small h3 { font-size: 7px; }
    .plate.bold .lens, .plate.bold .file, .plate.bold .no { font-weight: 700; -webkit-text-stroke: 0; }
    .cells { flex: 1; display: grid; grid-template-columns: minmax(0, 2fr) minmax(0, 1fr); min-height: 0; }
    .cells.one { grid-template-columns: minmax(0, 1fr); }
    .info { position: relative; padding: 2px 0 0 11px; white-space: pre; }
    :host(.cut) .info { padding-left: 7px; }
    .info p, .cfg p { margin: 0; }
    .info .lens { margin-bottom: 10px; }
    .tiny { font-size: 7px; }
    .mid { font-size: 8px; }
    .cfg { border-left: 1px solid #eee; display: flex; flex-direction: column; text-align: center; }
    .cfg.only { border-left: 0; }
    .cfg .top { height: 46px; border-bottom: 1px solid #ccc; }
    .cfg .file { font-size: 11px; line-height: 13px; white-space: nowrap; }
    .cfg .no { font-size: 9px; line-height: 13px; }
    .cfg.only .low { align-self: flex-end; width: 196px; }
    .swatches { display: grid; grid-template-columns: repeat(5, 59px); margin-top: 1px; }
    .over { position: absolute; left: 75px; top: 44px; display: grid; grid-template-columns: repeat(5, 63px); }
    .sw { width: 57px; padding-bottom: 5px; border-bottom: 1px solid; font-size: 11px; line-height: 14px; }
    .over .sw { padding-left: 5px; }
    .info .note { margin-top: 8px; font-size: 8px; }
    .freq { display: flex; justify-content: space-between; padding: 3px 3px 0 0; font-size: 11px; line-height: 8px; }
    .freq div:last-child { text-align: right; }
    .tabs { display: flex; height: 23px; flex: none; background: #cbced3; border-top: 1px solid #69718a; border-bottom: 1px solid #8e929a; padding-left: 4px; }
    :host(.cut) .tabs { padding-left: 0; }
    .tab { position: relative; width: 63px; height: 20px; padding-bottom: 3px; font-size: 12px; flex: none; }
    .tab.lead { width: 76px; padding-left: 10px; }
    .tab.lead.shift { margin-left: -5px; }
    .tab.mid-tab { width: 72px; margin-left: -9px; padding-left: 6px; }
    .tab svg { position: absolute; inset: 0; width: 100%; height: 100%; }
    .tab span { position: relative; }
  `];

  private bar(kind?: "full" | "end") {
    const now = html`
      <span class="sep"></span>
      <button class="dd now" aria-haspopup="true">当前${ic(I.caret, 8)}</button>
      <button class="b" aria-label="帮助">${ic(I.help)}</button>`;
    if (!kind) return nothing;
    if (kind === "end") return html`<div class="bar end"><button class="dd part" aria-label="粗">${ic(I.caret, 8)}</button>${now}</div>`;
    const b = (name: string, i: TemplateResult, cls = "b", size = 18) => html`<button class=${cls} aria-label=${name}>${ic(i, size)}</button>`;
    const sep = html`<span class="sep"></span>`;
    return html`<div class="bar">
      <button class="settings">${ic(I.chevron, 17)}设置</button>${sep}
      ${b("刷新", I.refresh, "b", 16)}${b("复制", I.copy, "b", 17)}${b("保存", I.saveAs, "b", 17)}${b("打印", I.print, "b", 17)}${sep}
      ${b("铅笔", I.pencil)}${b("矩形", I.rect)}${b("箭头", I.arrow)}${b("直线", I.line)}${b("文字", I.letter)}${sep}
      ${b("锁定", I.lock)}${sep}
      ${b("适合窗口", I.fit, "b on")}${b("停靠", I.dock, "b wide", 17)}
      <button class="dd layers" aria-label="图层">${ic(I.layers, 17)}${ic(I.caret, 8)}</button>
      <button class="dd num">3 x 4${ic(I.caret, 8)}</button>
      ${b("自动更新", I.clock)}${sep}
      <button class="dd coarse">粗${ic(I.caret, 8)}</button>${now}
    </div>`;
  }

  private tab(name: string, i: number) {
    const p = this.pane;
    const on = i === p.current;
    const lead = i === 0;
    const slanted = i === 1 && on;
    const w = lead ? 76 : slanted ? 72 : 63;
    const left = lead || slanted ? "M0 0C5 0 8 5 10 10C12 15 14 19.500 19 19.500" : "M0.500 0V13Q2 19.500 8 19.500";
    return html`<button class=${classMap({ tab: true, lead, "mid-tab": slanted, shift: lead && !!p.cut })} role="tab" aria-selected=${on ? "true" : "false"}>
      <svg viewBox="0 0 ${w} 20" preserveAspectRatio="none" aria-hidden="true">
        <defs><linearGradient id="g${i}" x2="0" y2="1"><stop stop-color=${on ? "#dcdfe3" : "#bcc3ca"}/><stop offset="1" stop-color=${on ? "#d6d8dc" : "#a7b0ba"}/></linearGradient></defs>
        <path d="${left}H${w - 0.5}V0" fill="url(#g${i})" stroke="#69718a"/>
      </svg><span>${name}</span></button>`;
  }

  render() {
    const p = this.pane;
    const controls = html`
      <button class="ctl" aria-label="菜单">${ic(I.caret, 12)}</button>
      <button class="ctl" aria-label="最小化">${ic(I.min, 11)}</button>
      <button class="ctl" aria-label="最大化">${ic(I.max, 12)}</button>
      <button class="ctl" aria-label="关闭">${ic(I.close, 11)}</button>`;
    return html`
      ${p.bar ? html`<div class=${p.bar === "end" ? "head first-head" : "head"}>
        ${p.icon ? ic(p.icon, 16) : nothing}${p.name ? html`<h2>${p.name}</h2>` : nothing}${controls}</div>` : nothing}
      ${this.bar(p.bar)}
      <div class="frame">
        <svg class="plot" viewBox="0 0 ${p.view[0]} ${p.view[1]}" role="img" aria-label=${p.id}>${p.draw()}</svg>
        <div class=${classMap({ plate: true, small: !!p.small, bold: !!p.bold })}>
          <h3>${p.title}</h3>
          <div class=${classMap({ cells: true, one: p.config !== "full" })}>
            ${p.config === "only" ? nothing : html`<div class="info"><p class="lens">1.4x 340mm, Inf</p>${p.body}</div>`}
            ${p.config === "none" ? nothing : html`<div class=${p.config === "only" ? "cfg only" : "cfg"}><div class="top"></div>
              <div class="low"><p class="file">GF 250mm F4 OIS TC.ZMX</p><p class="no">3的结构4</p></div></div>`}
          </div>
        </div>
      </div>
      <div class="tabs" role="tablist">${p.tabs.map((t, i) => this.tab(t, i))}</div>`;
  }
}

/* ---------- application ---------- */

const ALL_TABS = ["绘图", "经典", "文本"];

const PANES: Pane[] = [
  { id: "离焦", bar: "end", view: [122, 353], draw: chartPolychromatic, title: "", body: html``, config: "only", tabs: [], current: 0 },
  { id: "场曲/畸变", name: "3: 视场 场曲/畸变", icon: I.curve, bar: "full", view: [590, 353], draw: chartFieldCurvature,
    title: "场曲/ F-Tan(Theta) 畸变", config: "full", tabs: ALL_TABS, current: 1,
    body: html`<p>最大 视场是 4.559度.</p><p class="mid">波长:</p><p>弧矢场曲 = 0.0491 毫米</p><p>子午场曲 = 0.1393 毫米</p>${swatches("over")}` },
  { id: "MTF", name: "4: FFT MTF vs. 视场", icon: I.mtf, bar: "full", view: [590, 353], draw: chartMtf,
    title: "MTF 和 视场", config: "full", tabs: ALL_TABS, current: 1,
    body: html`<p>数据 0.4350 到 0.6563 μm.</p><div class="freq">
      <div><p style="color:${CYAN}">频率1:   10.00 cyc/mm</p><p style="color:${GREEN}">频率2:   20.00 cyc/mm</p><p style="color:${RED}">频率3:   40.00 cyc/mm</p></div>
      <div><p style="color:${YELLOW}">频率4:   80.00 cyc/mm</p><p style="color:${PURPLE}">频率5:  160.00 cyc/mm</p></div></div>` },
  { id: "点列图", name: "5: 点列图", icon: I.spots, bar: "full", view: [590, 353], draw: chartSpots,
    title: "点列图", small: true, bold: true, config: "full", tabs: ALL_TABS, current: 1,
    body: html`<p>${"单位是 μm." + " ".repeat(29) + "艾利斑半径 : 5.363 μm."}</p><p>${"视场      :        1        2        3        4        5        6"}</p><p>${"RMS半径 :    1.267    1.589    2.284    3.039    3.804    4.492"}</p><p>${"GEO半径 :    3.576    4.770    6.163    8.429   12.665   13.953"}</p><p>${"缩放条  :       20     参考  :主光线"}</p>` },
  { id: "焦移", view: [126, 350], draw: chartFocalShift, title: "", config: "none", tabs: ["绘图", "经典"], current: 1, cut: true,
    body: html`<p>最大焦移变化: 102.2083 μm</p><p>衍射极限变化: 141.558 μm</p><p>光瞳区域: 0.0000</p>` },
  { id: "垂轴色差", view: [590, 350], draw: chartLateral, title: "最大视场: 27.0000 毫米", config: "full", tabs: ALL_TABS, current: 1,
    body: html`<p>关于波长数据 0.546073 μm</p><p class="tiny">使用实际光线.</p>` },
  { id: "轴向像差", view: [590, 350], draw: chartLongitudinal, title: "光瞳半径: 21.2283 毫米", config: "full", tabs: ALL_TABS, current: 1,
    body: html`<p>波长:从 0.435 到 0.656 μm</p>${swatches()}` },
  { id: "横向光扇图", view: [590, 350], draw: chartFans, title: "横向光扇图", small: true, bold: true, config: "full", tabs: ["绘图", "文本"], current: 0,
    body: html`<p>最大缩放比例: ± 10.000 μm.</p>${swatches()}<p class="note">面: 像面</p>` },
];

type Tool = [string, TemplateResult] | "|";
const TOOLS: Tool[] = [
  "|", ["新建", I.newDoc], ["打开", I.open], ["保存", I.save], "|",
  ["另存为", I.saveAs], ["撤消", I.undo], ["重做", I.redo], ["窗口", I.windows], "|",
  ["镜头数据", I.greyDoc], ["视场数据", I.greyLens], ["编辑数据", I.greyEdit], ["更新", I.swap], ["上一个", I.left], ["下一个", I.right], "|",
  ["截面图", I.lens], ["相对照度", I.ri], ["场曲", I.curve], ["MTF", I.mtf], ["点列图", I.spots],
  ["布局一", I.ray1], ["布局二", I.ray2], ["布局三", I.ray3], ["光扇图", I.sine], "|",
  ["离焦", I.focus], ["MTF 视场", I.mtf], ["足迹", I.eh], "|",
  ["优化", I.play], ["报告", I.docStop], "|",
];

@customElement("app-root")
export class AppRoot extends LitElement {
  static styles = [base, css`
    :host { display: flex; flex-direction: column; min-height: 100vh; overflow: hidden; background: #cbced3; font-family: "Open Sans", "Noto Sans CJK SC", sans-serif; color: #111; }
    header { display: flex; height: 24px; background: linear-gradient(#f5f5f5, #fafafa); border-bottom: 1px solid #999; }
    .quick { display: flex; align-items: center; }
    .os { width: 16px; height: 17px; border: 1px solid #8a7a6a; background: #f08020; color: #fff; font: 10px/15px "Liberation Sans", sans-serif; text-align: center; }
    .q { width: 21px; height: 22px; }
    .q.menu { width: 32px; gap: 3px; }
    .sep { width: 1px; height: 14px; margin: 0 8px; background: #9a9fa6; }
    h1 { flex: 1; margin: 0 0 0 80px; font: 13px/16px Roboto, sans-serif; white-space: pre; color: #222; }
    .win { display: flex; padding-right: 2px; }
    .win button { width: 45px; height: 23px; padding-top: 5px; }
    main { display: grid; grid-template-columns: minmax(0, 126fr) minmax(0, 599fr) minmax(0, 599fr) minmax(0, 596fr); }
    .dock { position: relative; display: flex; height: 14px; flex: none; }
    .tree { width: 341px; height: 14px; padding-left: 17px; overflow: hidden; background: #dfe2e6; position: relative; }
    .tree p { margin: -8px 0 0; font-size: 12px; line-height: 16px; }
    .tree svg { position: absolute; left: 4px; top: 0; }
    .grip { width: 5px; background: #e6e8ea; border: solid #9ea2a8; border-width: 0 1px; }
    .float { position: absolute; left: 160px; top: 1px; width: 160px; height: 28px; overflow: hidden; background: #fff; border: 1px solid #999; border-bottom: 0; z-index: 1; }
    .float .row { display: flex; align-items: center; height: 22px; padding: 0 5px; border-bottom: 1px solid #9fb0c0; }
    .float h2 { width: 52px; margin: 0 0 0 4px; overflow: hidden; font: 12px/20px "Open Sans", "Noto Sans CJK SC", sans-serif; white-space: nowrap; }
    .float button { width: 19px; }
    footer { display: grid; grid-template-columns: 382fr 385fr 385fr 386fr 382fr; flex: 1 0 15px; background: linear-gradient(#2a4ea6, #17307a); color: #fff; font: 12px/16px "Open Sans", sans-serif; overflow: hidden; }
    footer span { height: 15px; padding-left: 4px; border-left: 1px solid #4f6fba; white-space: nowrap; }
    footer span:first-child { border-left: 0; padding-left: 2px; }
  `];

  render() {
    return html`
      <header>
        <nav class="quick" aria-label="快速访问">
          <span class="os">OS</span>
          ${TOOLS.map((t) => t === "|" ? html`<span class="sep"></span>`
            : html`<button class=${t[0] === "窗口" ? "q menu" : "q"} aria-label=${t[0]}>${ic(t[1], 17)}${t[0] === "窗口" ? ic(I.caret, 8) : nothing}</button>`)}
        </nav>
        <h1>${"Zemax OpticStudio 19.4    Premium - L668899 - GF 250mm F4 OIS TC.ZMX"}</h1>
        <div class="win">
          <button aria-label="最小化"><svg viewBox="0 0 12 12" width="12" height="12"><path d="M1 6.500h10" stroke="#444"/></svg></button>
          <button aria-label="还原"><svg viewBox="0 0 12 12" width="12" height="12"><path d="M3.500 3V1.500h7v7H9M1.500 3.500h7v7h-7z" fill="none" stroke="#444"/></svg></button>
          <button aria-label="关闭"><svg viewBox="0 0 12 12" width="12" height="12"><path d="M1 1l10 10M11 1L1 11" stroke="#444"/></svg></button>
        </div>
      </header>
      <main>
        ${PANES.map((p, i) => html`<plot-pane class=${classMap({ first: i % 4 === 0, last: i % 4 === 3, cut: !!p.cut })} .pane=${p}></plot-pane>`)}
      </main>
      <div class="dock">
        <div class="tree"><svg width="6" height="4" viewBox="0 0 6 4"><path d="M0 0h6L2 4z" fill="#444"/></svg><p>成本估计</p></div>
        <div class="grip"></div>
        <section class="float" aria-label="离焦点列图">
          <div class="row">${ic(I.focus, 16)}<h2>1: 离焦点列图</h2>
            <button aria-label="菜单">${ic(I.caret, 12)}</button>
            <button aria-label="还原">${ic(I.restore, 13)}</button>
            <button aria-label="最大化">${ic(I.max, 12)}</button>
            <button aria-label="关闭">${ic(I.close, 11)}</button></div>
        </section>
      </div>
      <footer><span>1.4x 340mm, Inf</span><span>EFFL: 339.653</span><span>WFNO: 8.0503</span><span>PMAG: 0</span><span>TOTR: 251.77</span></footer>`;
  }
}
